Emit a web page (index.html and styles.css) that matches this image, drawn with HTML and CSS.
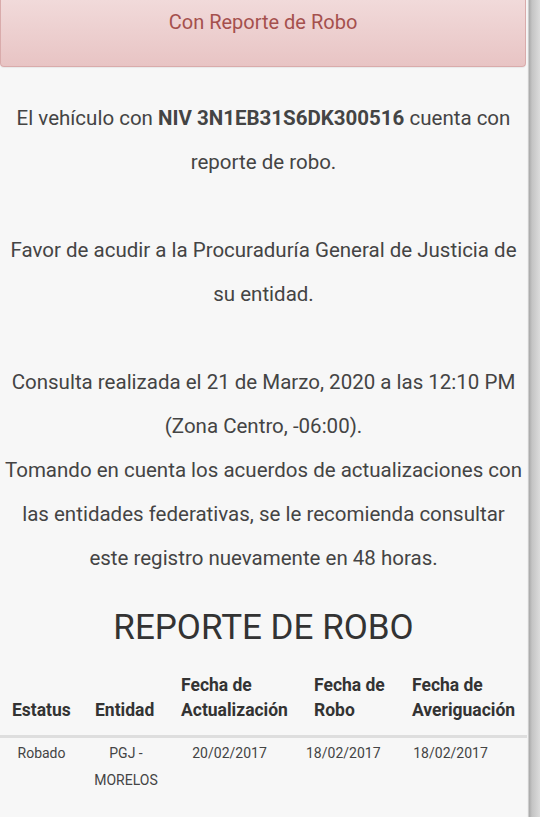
FILE: index.html
```html
<!DOCTYPE html>
<html lang="es">
<head>
<meta charset="utf-8">
<title>Con Reporte de Robo</title>
<link rel="stylesheet" href="styles.css">
</head>
<body>
<div class="page">
  <main class="main">
    <div class="alert">Con Reporte de Robo</div>
    <div class="content">
      <p class="para">El vehículo con <strong>NIV 3N1EB31S6DK300516</strong> cuenta con reporte de robo.</p>
      <p class="para">Favor de acudir a la Procuraduría General de Justicia de su entidad.</p>
      <p class="para tight">Consulta realizada el 21 de Marzo, 2020 a las 12:10 PM (Zona Centro, -06:00).</p>
      <p class="para tight">Tomando en cuenta los acuerdos de actualizaciones con las entidades federativas, se le recomienda consultar este registro nuevamente en 48 horas.</p>
    </div>
    <h2 class="title">REPORTE DE ROBO</h2>
    <table class="report">
      <thead>
        <tr>
          <th class="c-status">Estatus</th>
          <th class="c-entity">Entidad</th>
          <th class="c-upd">Fecha de Actualización</th>
          <th class="c-theft">Fecha de Robo</th>
          <th class="c-inq">Fecha de Averiguación</th>
        </tr>
      </thead>
      <tbody>
        <tr>
          <td>Robado</td>
          <td>PGJ - MORELOS</td>
          <td class="d-upd">20/02/2017</td>
          <td class="d-theft">18/02/2017</td>
          <td class="d-inq">18/02/2017</td>
        </tr>
      </tbody>
    </table>
  </main>
  <div class="edge"></div>
</div>
</body>
</html>
```

FILE: styles.css
```css
html, body {
  margin: 0;
  padding: 0;
  height: 100%;
}

body {
  font-family: Roboto, "Liberation Sans", Arial, sans-serif;
  color: #444;
  background: #f7f7f7;
  overflow: hidden;
}

.page {
  display: flex;
  height: 817px;
}

.main {
  width: 527px;
  flex: none;
  background: #f7f7f7;
}

.edge {
  flex: 1;
  background: linear-gradient(to right, #f2f2f2 0, #f2f2f2 1px, #a8a8a8 2px, #c4c4c4 5px, #dcdcdc 100%);
}

.alert {
  height: 67px;
  box-sizing: border-box;
  margin-right: 1px;
  padding: 0 15px;
  line-height: 44px;
  font-size: 20px;
  text-align: center;
  color: #a5504d;
  background: linear-gradient(#f1dada, #e8c4c4);
  border: 1px solid #d9abab;
  border-top: none;
  border-radius: 0 0 4px 4px;
  box-shadow: 0 1px 1px rgba(0, 0, 0, 0.06);
}

.content {
  padding: 29px 2px 0;
  text-align: center;
  font-size: 20.5px;
  line-height: 44px;
}

.para {
  margin: 0 0 44px;
}

.para.tight {
  margin: 0;
}

.title {
  margin: 27px 0 0;
  font-size: 35px;
  font-weight: 400;
  line-height: 42px;
  text-align: center;
  color: #333;
}

.report {
  width: 527px;
  margin-top: 24px;
  border-collapse: collapse;
  table-layout: fixed;
  font-size: 14px;
}

.report th {
  padding: 0 0 12px 12px;
  font-size: 17.5px;
  font-weight: 700;
  line-height: 25px;
  text-align: left;
  vertical-align: bottom;
  color: #333;
  border-bottom: 3px solid #dedede;
}

.c-status { width: 71px; }
.c-entity { width: 74px; }
.c-upd { width: 121px; }
.c-theft { width: 86px; }
.c-inq { width: 115px; }

.report td {
  padding: 2px 4px 10px;
  line-height: 27px;
  text-align: center;
  vertical-align: top;
  color: #444;
}

.report td.d-upd { padding-right: 16px; }
.report td.d-theft { padding-right: 23px; }
.report td.d-inq { padding-right: 30px; }
```
